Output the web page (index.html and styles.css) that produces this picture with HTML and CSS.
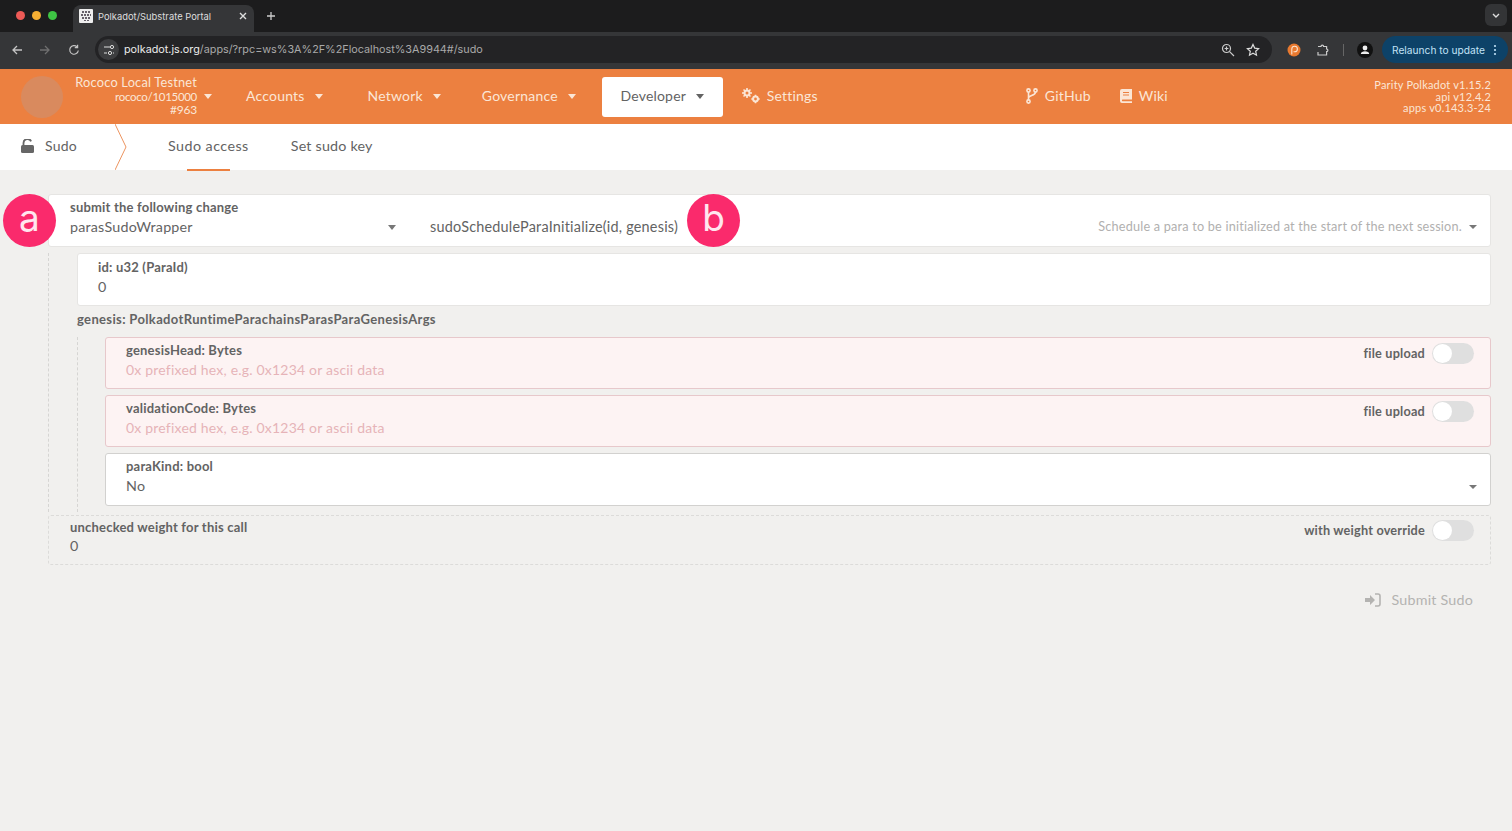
FILE: index.html
```html
<!DOCTYPE html>
<html lang="en">
<head>
    <meta charset="UTF-8">
    <title>Polkadot/Substrate Portal</title>
    <link rel="stylesheet" href="styles.css">
</head>
<body>

    <!-- browser tabs -->
    <div class="tabstrip">
        <div class="lights">
            <span class="light red"></span>
            <span class="light yellow"></span>
            <span class="light green"></span>
        </div>
        <div class="tab">
            <svg class="favicon" viewBox="0 0 14 14" width="14" height="14">
                <rect width="14" height="14" rx="1" fill="#eee"/>
                <path d="M3 2h2v2H3zM6 2h2v2H6zM9 2h2v2H9zM2 5h2v2H2zM5 5h2v2H5zM8 5h2v2H8zM11 5h1v2h-1zM3 8h2v2H3zM6 8h2v2H6zM9 8h2v2H9zM5 11h2v1H5zM8 11h2v1H8z" fill="#66606a"/>
            </svg>
            <span class="tab-title">Polkadot/Substrate Portal</span>
            <svg class="tab-close" viewBox="0 0 10 10" width="10" height="10"><path d="M2 2l6 6M8 2l-6 6" stroke="#ddd" stroke-width="1.4"/></svg>
        </div>
        <svg class="new-tab" viewBox="0 0 10 10" width="10" height="10"><path d="M5 1v8M1 5h8" stroke="#ccc" stroke-width="1.3"/></svg>
        <div class="tab-menu">
            <svg viewBox="0 0 10 10" width="10" height="10"><path d="M2 4l3 3 3-3" fill="none" stroke="#ddd" stroke-width="1.4"/></svg>
        </div>
    </div>

    <!-- browser toolbar -->
    <div class="toolbar">
        <svg class="tool" viewBox="0 0 12 12" width="12" height="12"><path d="M11 6H2M6 2L2 6l4 4" fill="none" stroke="#c4c4c4" stroke-width="1.3"/></svg>
        <svg class="tool" viewBox="0 0 12 12" width="12" height="12"><path d="M1 6h9M6 2l4 4-4 4" fill="none" stroke="#6f6f6f" stroke-width="1.3"/></svg>
        <svg class="tool" viewBox="0 0 12 12" width="12" height="12"><path d="M10.3 6.5A4.3 4.3 0 1 1 9 2.8M9.6 .8v2.8H6.8" fill="none" stroke="#c4c4c4" stroke-width="1.2"/></svg>
        <div class="omnibox">
            <span class="site-info">
                <svg viewBox="0 0 12 12" width="12" height="12"><path d="M1 3h6M1 9h3M10 9h1" stroke="#ddd" stroke-width="1.1"/><circle cx="9" cy="3" r="1.6" fill="none" stroke="#ddd"/><circle cx="7" cy="9" r="1.6" fill="none" stroke="#ddd"/></svg>
            </span>
            <span class="url"><b>polkadot.js.org</b>/apps/?rpc=ws%3A%2F%2Flocalhost%3A9944#/sudo</span>
            <svg class="omni-icon" viewBox="0 0 14 14" width="14" height="14"><circle cx="5.5" cy="5.5" r="4" fill="none" stroke="#ccc" stroke-width="1.2"/><path d="M8.6 8.6L13 13M3.6 5.5h3.8M5.5 3.6v3.8" stroke="#ccc" stroke-width="1.2"/></svg>
            <svg class="omni-icon" viewBox="0 0 14 14" width="14" height="14"><path d="M7 1.5l1.7 3.6 3.9.5-2.9 2.7.8 3.9L7 10.3l-3.5 1.9.8-3.9L1.4 5.6l3.9-.5z" fill="none" stroke="#ddd" stroke-width="1.2"/></svg>
        </div>
        <svg class="ext" viewBox="0 0 14 14" width="14" height="14"><circle cx="7" cy="7" r="6.5" fill="#e8792f"/><path d="M4.800 11.500V6a2.800 2.800 0 1 1 2.800 2.800H6.500" fill="none" stroke="#fbe3cf" stroke-width="1.100"/></svg>
        <svg class="ext puzzle" viewBox="0 0 14 14" width="14" height="14"><path d="M2 3.500h3a1.300 1.300 0 0 1 2.600 0h3v2.500a1.300 1.300 0 0 1 0 2.600v3.400H2V9" fill="none" stroke="#ccc" stroke-width="1.200"/></svg>
        <span class="tool-sep"></span>
        <span class="profile">
            <svg viewBox="0 0 16 16" width="16" height="16"><circle cx="8" cy="8" r="8" fill="#111"/><circle cx="8" cy="6" r="2.4" fill="#eee"/><path d="M3.8 12c0-2 2-2.8 4.2-2.8s4.2.8 4.2 2.8z" fill="#eee"/></svg>
        </span>
        <div class="relaunch">
            <span>Relaunch to update</span>
            <svg viewBox="0 0 4 12" width="4" height="12"><circle cx="2" cy="2" r="1.1" fill="#bfe0f5"/><circle cx="2" cy="6" r="1.1" fill="#bfe0f5"/><circle cx="2" cy="10" r="1.1" fill="#bfe0f5"/></svg>
        </div>
    </div>

    <!-- app menu -->
    <nav class="menu">
        <div class="chain-logo"></div>
        <div class="chain-info">
            <div class="chain-name">Rococo Local Testnet</div>
            <div class="chain-runtime">rococo/1015000</div>
            <div class="chain-block">#963</div>
        </div>
        <span class="caret caret-chain"></span>
        <a class="menu-item item-accounts">Accounts <span class="caret"></span></a>
        <a class="menu-item item-network">Network <span class="caret"></span></a>
        <a class="menu-item item-governance">Governance <span class="caret"></span></a>
        <a class="menu-item active">Developer <span class="caret"></span></a>
        <a class="menu-item item-settings">
            <svg viewBox="0 0 18 16" width="18" height="16" fill="#fbe6d6">
                <circle cx="5" cy="5" r="2.500" fill="none" stroke="#fbe6d6" stroke-width="2"/>
                <path d="M4.200 0h1.600v2H4.200zM4.200 8h1.600v2H4.200zM0 4.200h2v1.600H0zM8 4.200h2v1.600H8zM1 2.100L2.100 1l1.400 1.400-1.100 1.100zM6.500 7.600l1.100-1.100L9 7.900 7.900 9zM1 7.900l1.400-1.400 1.100 1.100L2.100 9zM6.500 2.400L7.900 1 9 2.100 7.600 3.500z"/>
                <circle cx="13.500" cy="11" r="2.400" fill="none" stroke="#fbe6d6" stroke-width="2"/>
                <path d="M12.700 6.800h1.600v1.800h-1.600zM12.700 13.400h1.600v1.800h-1.600zM9.300 10.200h1.800v1.600H9.300zM15.900 10.200h1.800v1.600h-1.800z"/>
            </svg>
            Settings
        </a>
        <a class="menu-item item-github">
            <svg viewBox="0 0 12 16" width="12" height="16"><circle cx="2.500" cy="2.500" r="1.600" fill="none" stroke="#fbe6d6" stroke-width="1.600"/><circle cx="9.500" cy="2.500" r="1.600" fill="none" stroke="#fbe6d6" stroke-width="1.600"/><circle cx="2.500" cy="13.500" r="1.600" fill="none" stroke="#fbe6d6" stroke-width="1.600"/><path d="M2.500 4v8M9.500 4c0 4-7 3-7 6" fill="none" stroke="#fbe6d6" stroke-width="1.600"/></svg>
            GitHub
        </a>
        <a class="menu-item item-wiki">
            <svg viewBox="0 0 12 14" width="12" height="14"><path d="M2 0h10v10.500H2.500a1 1 0 0 0 0 1.800H12V14H2a2 2 0 0 1-2-2V2a2 2 0 0 1 2-2z" fill="#fbe6d6"/><path d="M3 3h6v1H3zM3 5.500h6v1H3z" fill="#ec8040"/></svg>
            Wiki
        </a>
        <div class="versions">
            <div>Parity Polkadot v1.15.2</div>
            <div>api v12.4.2</div>
            <div>apps v0.143.3-24</div>
        </div>
    </nav>

    <!-- sub tabs -->
    <div class="subnav">
        <div class="subnav-head">
            <svg viewBox="0 0 13 14" width="13" height="14"><path d="M2.500 6V4a4 4 0 0 1 7.600-1.700" fill="none" stroke="#666" stroke-width="1.800"/><rect y="6" width="13" height="8" rx="1.500" fill="#666"/></svg>
            <span>Sudo</span>
        </div>
        <svg class="chevron" viewBox="0 0 12 46" width="12" height="46"><path d="M0 0l11 23L0 46" fill="none" stroke="#ec9460"/></svg>
        <a class="subtab current">Sudo access</a>
        <a class="subtab">Set sudo key</a>
    </div>

    <!-- sudo form -->
    <main class="page">
        <div class="badge badge-a">a</div>
        <div class="badge badge-b">b</div>

        <div class="card call-row">
            <div class="call-section">
                <label>submit the following change</label>
                <div class="value">parasSudoWrapper</div>
                <span class="caret dark"></span>
            </div>
            <div class="call-method">
                <div class="value">sudoScheduleParaInitialize(id, genesis)</div>
                <div class="call-doc">Schedule a para to be initialized at the start of the next session.</div>
                <span class="caret dark small"></span>
            </div>
        </div>

        <div class="params">
            <div class="card field">
                <label>id: u32 (ParaId)</label>
                <div class="value">0</div>
            </div>
            <div class="struct-label">genesis: PolkadotRuntimeParachainsParasParaGenesisArgs</div>
            <div class="struct">
                <div class="card field error">
                    <label>genesisHead: Bytes</label>
                    <div class="placeholder">0x prefixed hex, e.g. 0x1234 or ascii data</div>
                    <div class="toggle-wrap"><b>file upload</b><span class="toggle"></span></div>
                </div>
                <div class="card field error">
                    <label>validationCode: Bytes</label>
                    <div class="placeholder">0x prefixed hex, e.g. 0x1234 or ascii data</div>
                    <div class="toggle-wrap"><b>file upload</b><span class="toggle"></span></div>
                </div>
                <div class="card field bool">
                    <label>paraKind: bool</label>
                    <div class="value">No</div>
                    <span class="caret dark small"></span>
                </div>
            </div>
        </div>

        <div class="weight">
            <label>unchecked weight for this call</label>
            <div class="value">0</div>
            <div class="toggle-wrap"><b>with weight override</b><span class="toggle"></span></div>
        </div>

        <div class="actions">
            <button class="submit" type="button">
                <svg viewBox="0 0 16 14" width="16" height="14"><path d="M0 5h5V2l5 5-5 5V9H0z" fill="#b4b3b1"/><path d="M10 1h3a2 2 0 0 1 2 2v8a2 2 0 0 1-2 2h-3" fill="none" stroke="#b4b3b1" stroke-width="1.600"/></svg>
                Submit Sudo
            </button>
        </div>
    </main>

</body>
</html>
```

FILE: styles.css
```css
* {
    box-sizing: border-box;
}
html, body {
    height: 100%;
}
body {
    margin: 0;
    overflow: hidden;
    display: flex;
    flex-direction: column;
    background: #f1f0ee;
    color: #636363;
    font-family: Lato, Arial, sans-serif;
    font-size: 14px;
    letter-spacing: 0.2px;
}

/* browser tabs */
.tabstrip {
    height: 32px;
    flex: none;
    background: #1c1c1d;
    display: flex;
    align-items: flex-end;
    position: relative;
    font-family: Inter, Arial, sans-serif;
    letter-spacing: 0;
}
.lights {
    display: flex;
    gap: 7px;
    padding: 0 0 12px 16px;
    width: 73px;
}
.light {
    width: 9px;
    height: 9px;
    border-radius: 50%;
}
.red { background: #ed5a56; }
.yellow { background: #f5ae33; }
.green { background: #3ec444; }
.tab {
    width: 181px;
    height: 27px;
    background: #353638;
    border-radius: 8px 8px 0 0;
    display: flex;
    align-items: center;
    padding: 0 6px 5px 6px;
    color: #dedede;
    font-size: 9.400px;
}
.favicon {
    margin-right: 5px;
}
.tab-title {
    flex: 1;
    white-space: nowrap;
}
.new-tab {
    margin: 0 0 11px 12px;
}
.tab-menu {
    width: 22px;
    height: 22px;
    background: #333436;
    border-radius: 6px;
    margin: 0 5px 6px auto;
    display: flex;
    align-items: center;
    justify-content: center;
}

/* browser toolbar */
.toolbar {
    height: 37px;
    flex: none;
    background: #353638;
    display: flex;
    align-items: center;
    padding: 0 0 2px 11px;
    font-family: Inter, Arial, sans-serif;
    letter-spacing: 0;
}
.tool {
    margin-right: 16px;
}
.tool:nth-child(3) {
    margin-left: 1px;
    margin-right: 15px;
}
.omnibox {
    width: 1177px;
    height: 27px;
    background: #232325;
    border-radius: 14px;
    display: flex;
    align-items: center;
    padding: 0 12px 0 3px;
}
.site-info {
    width: 21px;
    height: 21px;
    border-radius: 50%;
    background: #3d3e40;
    display: flex;
    align-items: center;
    justify-content: center;
    margin-right: 5px;
}
.url {
    flex: 1;
    color: #a9a9a9;
    font-size: 10.800px;
    white-space: nowrap;
}
.url b {
    color: #ececec;
    font-weight: 400;
}
.omni-icon {
    margin-left: 11px;
}
.ext {
    margin-left: 15px;
}
.puzzle {
    margin-left: 15px;
}
.tool-sep {
    width: 1px;
    height: 12px;
    background: #666;
    margin: 0 13px;
}
.profile {
    display: flex;
    margin-right: 9px;
}
.relaunch {
    width: 126px;
    height: 27px;
    background: #0d4268;
    border-radius: 14px;
    color: #c2e2f7;
    font-size: 10.200px;
    display: flex;
    align-items: center;
    justify-content: space-between;
    padding: 0 11px 0 10px;
    white-space: nowrap;
}

/* app menu */
.menu {
    height: 55px;
    flex: none;
    background: #ec8040;
    color: #fbe6d6;
    display: flex;
    align-items: center;
    padding-left: 21px;
    position: relative;
}
.chain-logo {
    width: 42px;
    height: 42px;
    border-radius: 50%;
    background: #d98a5e;
}
.chain-info {
    margin-left: 11px;
    width: 123px;
    font-size: 12px;
    line-height: 13.500px;
    text-align: right;
    white-space: nowrap;
}
.chain-name {
    font-size: 12.800px;
}
.chain-runtime {
    font-size: 11.500px;
    letter-spacing: -0.3px;
}
.chain-block {
    letter-spacing: -0.2px;
}
.caret {
    display: inline-block;
    width: 0;
    height: 0;
    border-left: 4.500px solid transparent;
    border-right: 4.500px solid transparent;
    border-top: 5px solid #fbe6d6;
    margin-left: 6px;
    vertical-align: 2px;
}
.caret-chain {
    margin-left: 7px;
}
.menu-item {
    font-size: 14px;
    height: 40px;
    padding-bottom: 2px;
    display: flex;
    align-items: center;
    white-space: nowrap;
}
.menu-item .caret {
    margin: 2px 0 0 10px;
}
.item-accounts { margin-left: 34px; }
.item-network { margin-left: 45px; }
.item-governance { margin-left: 41px; }
.menu-item.active {
    margin-left: 26px;
    width: 121px;
    justify-content: center;
    background: #fff;
    color: #636363;
    border-radius: 3px;
}
.menu-item.active .caret {
    border-top-color: #636363;
}
.item-settings { margin-left: 19px; gap: 7px; }
.item-github { margin-left: 208px; gap: 7px; }
.item-wiki { margin-left: 29px; gap: 7px; }
.versions {
    margin-left: auto;
    padding-right: 21px;
    text-align: right;
    font-size: 11px;
    line-height: 11.500px;
}

/* sub tabs */
.subnav {
    height: 46px;
    flex: none;
    background: #fff;
    display: flex;
    align-items: center;
}
.subnav-head {
    width: 115px;
    padding: 0 0 3px 21px;
    display: flex;
    align-items: center;
    gap: 11px;
    font-size: 14px;
}
.chevron {
    flex: none;
}
.subtab {
    font-size: 14.300px;
    height: 46px;
    padding-bottom: 4px;
    display: flex;
    align-items: center;
    position: relative;
}
.subtab.current {
    margin-left: 41px;
    margin-right: 42px;
    letter-spacing: 0.45px;
}
.subtab.current::after {
    content: "";
    position: absolute;
    left: 19px;
    right: 19px;
    bottom: -1px;
    height: 2px;
    background: #ec8040;
}

/* sudo form */
.page {
    flex: 1;
    padding: 24px 21px 0 48px;
    position: relative;
    display: flex;
    flex-direction: column;
}
.badge {
    position: absolute;
    top: 24px;
    width: 53px;
    height: 53px;
    border-radius: 50%;
    background: #fa2a6c;
    color: #ffe6ee;
    font-family: Inter, Arial, sans-serif;
    font-size: 37px;
    line-height: 47px;
    text-align: center;
    letter-spacing: 0;
    z-index: 2;
}
.badge-a { left: 3px; }
.badge-b { left: 687px; }
.card {
    background: #fff;
    border: 1px solid #e6e5e3;
    border-radius: 3px;
}
label, .toggle-wrap b, .struct-label {
    font-size: 13px;
    font-weight: 700;
    color: #636363;
}
label {
    display: block;
    line-height: 16px;
}
.value, .placeholder {
    font-size: 14.300px;
    line-height: 20px;
    margin-top: 2px;
}
.placeholder {
    font-size: 14px;
    color: #e6b3b8;
}
.call-row {
    height: 53px;
    display: flex;
    position: relative;
}
.call-section {
    width: 360px;
    padding: 4px 0 0 21px;
    position: relative;
}
.call-section .caret {
    position: absolute;
    right: 13px;
    top: 30px;
}
.call-method {
    flex: 1;
    display: flex;
    align-items: center;
    padding: 12px 13px 0 21px;
}
.call-method .value {
    margin: 0;
    flex: 1;
    font-size: 14.450px;
}
.call-doc {
    font-size: 12.700px;
    padding-bottom: 1px;
    color: #b1b0af;
}
.caret.dark {
    border-top-color: #777;
}
.caret.small {
    margin-left: 7px;
    border-left-width: 4px;
    border-right-width: 4px;
    border-top-width: 4px;
    vertical-align: middle;
}
.params {
    margin-top: 6px;
    padding-left: 28px;
    border-left: 1px dashed #d6d5d3;
    height: 259px;
}
.field {
    height: 53px;
    padding: 5px 0 0 20px;
    position: relative;
}
.struct-label {
    margin-top: 5px;
    height: 26px;
    line-height: 16px;
    letter-spacing: 0.35px;
}
.struct {
    margin-left: 0;
    padding-left: 27px;
    border-left: 1px dashed #d6d5d3;
    display: flex;
    flex-direction: column;
    gap: 6px;
    height: 175px;
}
.struct .field {
    height: 52px;
    padding-top: 4px;
}
.field.error {
    background: #fdf3f3;
    border-color: #e7c8cb;
}
.field.bool {
    border-color: #d2d1cf;
    height: 53px;
}
.field.bool .caret {
    position: absolute;
    right: 13px;
    top: 31px;
}
.toggle-wrap {
    position: absolute;
    right: 16px;
    top: 5px;
    display: flex;
    align-items: center;
    gap: 7px;
}
.toggle-wrap b {
    font-size: 12.700px;
    padding-bottom: 2px;
}
.weight .toggle-wrap {
    top: 4px;
}
.toggle {
    width: 42px;
    height: 21px;
    border-radius: 11px;
    background: #dfdfdf;
    position: relative;
}
.toggle::before {
    content: "";
    position: absolute;
    left: 1px;
    top: 1px;
    width: 19px;
    height: 19px;
    border-radius: 50%;
    background: #fff;
}
.weight {
    margin-top: 3px;
    height: 50px;
    border: 1px dashed #dcdbd9;
    border-radius: 3px;
    padding: 3px 0 0 21px;
    position: relative;
}
.weight .value {
    margin-top: 1px;
}
.actions {
    display: flex;
    justify-content: flex-end;
    padding: 26px 18px 0 0;
}
.submit {
    border: none;
    background: none;
    padding: 0;
    display: flex;
    align-items: center;
    gap: 11px;
    color: #b4b3b1;
    font-family: inherit;
    font-size: 14.300px;
    letter-spacing: inherit;
}
```
